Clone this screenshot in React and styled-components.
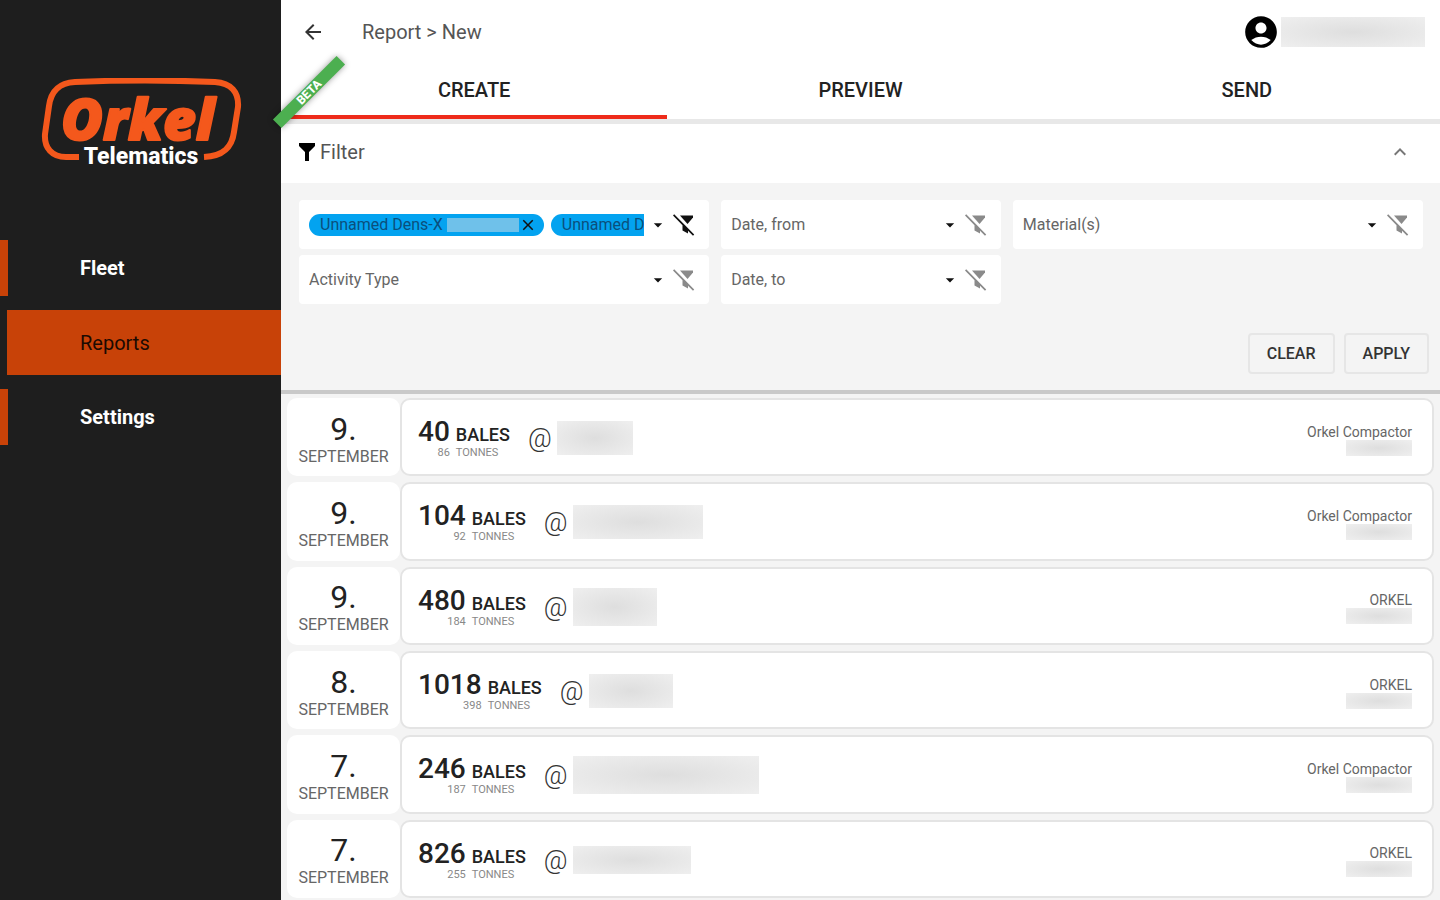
import React, { useState } from "react";
import styled, { createGlobalStyle } from "styled-components";
import { MdAccountCircle, MdArrowBack, MdArrowDropDown, MdClose, MdKeyboardArrowUp } from "react-icons/md";

const GlobalStyle = createGlobalStyle`
  * {
    box-sizing: border-box;
  }

  body {
    margin: 0;
    font-family: Roboto, "Liberation Sans", sans-serif;
    color: #222;
    background: #f4f4f4;
  }

  button, select {
    font-family: inherit;
    color: inherit;
    border: none;
    background: none;
    padding: 0;
    cursor: pointer;
  }
`;

const navItems = ["Fleet", "Reports", "Settings"];
const tabs = ["Create", "Preview", "Send"];

const activities = [
  { day: 9, month: "September", bales: 40, tonnes: 86, placeWidth: 76, placeHeight: 34, owner: "Orkel Compactor" },
  { day: 9, month: "September", bales: 104, tonnes: 92, placeWidth: 130, placeHeight: 34, owner: "Orkel Compactor" },
  { day: 9, month: "September", bales: 480, tonnes: 184, placeWidth: 84, placeHeight: 38, owner: "ORKEL" },
  { day: 8, month: "September", bales: 1018, tonnes: 398, placeWidth: 84, placeHeight: 34, owner: "ORKEL" },
  { day: 7, month: "September", bales: 246, tonnes: 187, placeWidth: 186, placeHeight: 38, owner: "Orkel Compactor" },
  { day: 7, month: "September", bales: 826, tonnes: 255, placeWidth: 118, placeHeight: 28, owner: "ORKEL" },
];

function Logo() {
  return (
    <LogoSvg viewBox="0 0 204 94" role="img" aria-label="Orkel Telematics">
      <path
        d="M38 79 H25 C11 79 3 70 4 56 L8 28 C10 13 18 5 34 4 Q104 1 174 4 C190 5 198 14 197 29 L193 54 C191 69 183 78 163 79"
        fill="none"
        stroke="#f4581c"
        strokeWidth="6"
      />
      <LogoName x="20" y="62">Orkel</LogoName>
      <LogoSub x="100" y="86">Telematics</LogoSub>
    </LogoSvg>
  );
}

function FunnelIcon() {
  return (
    <svg width="17" height="20" viewBox="0 0 17 20" aria-hidden="true">
      <path d="M1 1h16v3l-6 6v9h-4v-9L1 4z" fill="#000" />
    </svg>
  );
}

function FilterOffIcon() {
  return (
    <svg width="24" height="24" viewBox="0 0 24 24" fill="currentColor" aria-hidden="true">
      <path d="M2.200 1.300 1 2.500l9.500 9.700v5.300l5.500 3v-2.700l5 5 1.200-1.200z" />
      <path d="M8 2.500h13v2l-5.500 6.500z" />
    </svg>
  );
}

function FilterSelect({ label }) {
  return (
    <Field>
      <Select aria-label={label} defaultValue="">
        <option value="">{label}</option>
      </Select>
      <MdArrowDropDown size={20} color="#111" aria-hidden="true" />
      <ClearFilter type="button" aria-label={"Clear " + label}>
        <FilterOffIcon />
      </ClearFilter>
    </Field>
  );
}

function Activity({ item }) {
  return (
    <Row>
      <DateCell>
        <Day>{item.day}.</Day>
        <Month>{item.month}</Month>
      </DateCell>
      <Card>
        <Amounts>
          <BaleCount>{item.bales}</BaleCount>
          <BaleUnit>BALES</BaleUnit>
          <Tonnes $right>{item.tonnes}</Tonnes>
          <Tonnes>TONNES</Tonnes>
        </Amounts>
        <At>@</At>
        <Hidden style={{ width: item.placeWidth, height: item.placeHeight }} />
        <Owner>
          <span>{item.owner}</span>
          <HiddenSerial />
        </Owner>
      </Card>
    </Row>
  );
}

export default function App() {
  const [tab, setTab] = useState("Create");
  const [open, setOpen] = useState(true);

  return (
    <>
      <GlobalStyle />
      <Shell>
        <Sidebar>
          <Logo />
          <Nav>
            {navItems.map((name) => (
              <NavLink key={name} href="#" $active={name === "Reports"}>
                {name}
              </NavLink>
            ))}
          </Nav>
        </Sidebar>

        <Main>
          <Beta>BETA</Beta>
          <Header>
            <IconButton type="button" aria-label="Back">
              <MdArrowBack size={24} />
            </IconButton>
            <Crumbs>Report &gt; New</Crumbs>
            <MdAccountCircle size={38} color="#000" />
            <HiddenUser />
          </Header>

          <Tabs role="tablist">
            {tabs.map((name) => (
              <Tab key={name} type="button" role="tab" aria-selected={tab === name} $active={tab === name} onClick={() => setTab(name)}>
                {name}
              </Tab>
            ))}
          </Tabs>

          <FilterToggle type="button" aria-expanded={open} onClick={() => setOpen(!open)}>
            <FunnelIcon />
            <span>Filter</span>
            <MdKeyboardArrowUp size={24} color="#777" />
          </FilterToggle>

          {open && (
            <FilterPanel>
              <Fields>
                <Field>
                  <Chips>
                    <Chip>
                      Unnamed Dens-X
                      <HiddenChip />
                      <ChipRemove type="button" aria-label="Remove Unnamed Dens-X">
                        <MdClose size={18} />
                      </ChipRemove>
                    </Chip>
                    <Chip>Unnamed Dens-X</Chip>
                  </Chips>
                  <IconButton type="button" aria-label="Choose machines">
                    <MdArrowDropDown size={20} color="#111" />
                  </IconButton>
                  <ClearFilter type="button" aria-label="Clear machines" $set>
                    <FilterOffIcon />
                  </ClearFilter>
                </Field>
                <FilterSelect label="Date, from" />
                <FilterSelect label="Material(s)" />
                <FilterSelect label="Activity Type" />
                <FilterSelect label="Date, to" />
              </Fields>
              <Actions>
                <ActionButton type="button">CLEAR</ActionButton>
                <ActionButton type="button">APPLY</ActionButton>
              </Actions>
            </FilterPanel>
          )}

          <List>
            {activities.map((item, i) => (
              <Activity key={i} item={item} />
            ))}
          </List>
        </Main>
      </Shell>
    </>
  );
}

const Shell = styled.div`
  display: flex;
  min-height: 100vh;
`;

const Sidebar = styled.aside`
  flex: 0 0 281px;
  padding-top: 78px;
  background: #1e1e1e;
`;

const LogoSvg = styled.svg`
  display: block;
  width: 204px;
  height: 94px;
  margin-left: 41px;
`;

const LogoName = styled.text`
  font-family: "Open Sans", sans-serif;
  font-size: 57px;
  font-weight: 800;
  font-style: italic;
  fill: #f4581c;
  stroke: #f4581c;
  stroke-width: 2px;
  stroke-linejoin: round;
`;

const LogoSub = styled.text`
  font-size: 23px;
  font-weight: 800;
  text-anchor: middle;
  fill: #fff;
`;

const Nav = styled.nav`
  display: flex;
  flex-direction: column;
  gap: 14px;
  margin-top: 68px;
`;

const NavLink = styled.a`
  display: flex;
  align-items: center;
  height: ${(props) => (props.$active ? "65px" : "56px")};
  margin-left: ${(props) => (props.$active ? "7px" : "0")};
  padding-left: ${(props) => (props.$active ? "73px" : "72px")};
  border-left: ${(props) => (props.$active ? "none" : "8px solid #c84208")};
  background: ${(props) => (props.$active ? "#c84208" : "transparent")};
  color: ${(props) => (props.$active ? "#1c0a02" : "#fff")};
  font-size: 20px;
  font-weight: ${(props) => (props.$active ? 400 : 700)};
  text-decoration: none;
`;

const Main = styled.main`
  position: relative;
  flex: 1;
  min-width: 0;
  display: flex;
  flex-direction: column;
`;

const Beta = styled.div`
  position: absolute;
  top: 86px;
  left: -17px;
  width: 90px;
  background: #4caf50;
  box-shadow: 0 0 6px rgba(0, 0, 0, 0.4);
  color: #fff;
  font-size: 12px;
  font-weight: 800;
  line-height: 12px;
  text-align: center;
  transform: rotate(-45deg);
`;

const Header = styled.header`
  display: flex;
  align-items: center;
  height: 64px;
  padding: 0 15px 0 20px;
  background: #fff;
`;

const IconButton = styled.button`
  display: flex;
  color: #333;
`;

const Crumbs = styled.h1`
  flex: 1;
  margin: 0 0 0 37px;
  font-size: 20px;
  font-weight: 400;
  color: #555;
`;

const Hidden = styled.div`
  background: radial-gradient(ellipse, #dedede, #efefef);
`;

const HiddenUser = styled(Hidden)`
  width: 144px;
  height: 30px;
  margin-left: 1px;
`;

const HiddenSerial = styled(Hidden)`
  width: 66px;
  height: 16px;
`;

const HiddenChip = styled.span`
  width: 72px;
  height: 14px;
  margin-left: 4px;
  background: #6fc1ea;
`;

const Tabs = styled.div`
  display: grid;
  grid-template-columns: repeat(3, 1fr);
  background: #fff;
  border-bottom: 5px solid #e8e8e8;
`;

const Tab = styled.button`
  height: 55px;
  border-bottom: 4px solid ${(props) => (props.$active ? "#ee2b1a" : "transparent")};
  font-size: 20px;
  font-weight: 500;
  text-transform: uppercase;
`;

const FilterToggle = styled.button`
  display: flex;
  align-items: center;
  gap: 5px;
  height: 59px;
  padding: 0 28px 4px 17px;
  background: #fff;
  color: #555;
  font-size: 20px;
  text-align: left;

  span {
    flex: 1;
  }
`;

const FilterPanel = styled.section`
  padding: 17px 11px 16px 18px;
`;

const Fields = styled.div`
  display: grid;
  grid-template-columns: 22fr 15fr 22fr;
  gap: 6px 12px;
  margin-right: 6px;
`;

const Field = styled.div`
  display: flex;
  align-items: center;
  min-width: 0;
  height: 49px;
  padding: 0 13px 0 10px;
  border-radius: 4px;
  background: #fff;
`;

const Select = styled.select`
  flex: 1;
  min-width: 0;
  height: 100%;
  appearance: none;
  outline: none;
  color: #666;
  font-size: 16px;
`;

const ClearFilter = styled.button`
  display: flex;
  margin-left: 4px;
  color: ${(props) => (props.$set ? "#111" : "#8a8a8a")};
`;

const Chips = styled.div`
  display: flex;
  flex: 1;
  gap: 7px;
  min-width: 0;
  margin-right: 4px;
  overflow: hidden;
`;

const Chip = styled.span`
  display: flex;
  flex: none;
  align-items: center;
  height: 22px;
  padding: 0 7px 0 11px;
  border-radius: 11px;
  background: #03a3f0;
  color: #0b4f7c;
  font-size: 16px;
`;

const ChipRemove = styled.button`
  display: flex;
  color: #111;
`;

const Actions = styled.div`
  display: flex;
  justify-content: flex-end;
  gap: 9px;
  margin-top: 29px;
`;

const ActionButton = styled.button`
  height: 41px;
  padding: 0 17px;
  border: 2px solid #e6e6e6;
  border-radius: 4px;
  color: #333;
  font-size: 16px;
  font-weight: 500;
`;

const List = styled.section`
  display: flex;
  flex: 1;
  flex-direction: column;
  gap: 6px;
  padding: 4px 6px 2px;
  border-top: 4px solid #c9c9c9;
`;

const Row = styled.article`
  display: flex;
  flex: 1;
  min-height: 78px;
`;

const DateCell = styled.div`
  display: flex;
  flex: 0 0 113px;
  flex-direction: column;
  align-items: center;
  justify-content: center;
  padding-top: 3px;
  border-radius: 10px;
  background: #fff;
`;

const Day = styled.div`
  font-size: 32px;
  font-weight: 400;
  line-height: 36px;
`;

const Month = styled.div`
  font-size: 16px;
  line-height: 20px;
  color: #666;
  text-transform: uppercase;
`;

const Card = styled.div`
  display: flex;
  flex: 1;
  align-items: center;
  padding: 2px 20px 0 16px;
  border: 2px solid #e4e4e4;
  border-radius: 10px;
  background: #fff;
`;

const Amounts = styled.div`
  display: grid;
  grid-template-columns: auto auto;
  column-gap: 6px;
  align-items: baseline;
`;

const BaleCount = styled.strong`
  font-size: 28px;
  font-weight: 500;
  line-height: 30px;
`;

const BaleUnit = styled.span`
  font-size: 18px;
  font-weight: 500;
  line-height: 20px;
`;

const Tonnes = styled.span`
  font-size: 11px;
  line-height: 12px;
  color: #888;
  text-align: ${(props) => (props.$right ? "right" : "left")};
`;

const At = styled.span`
  margin: 0 5px 0 18px;
  font-size: 26px;
  font-weight: 300;
  color: #333;
`;

const Owner = styled.div`
  display: flex;
  flex-direction: column;
  align-items: flex-end;
  margin-left: auto;
  padding-top: 3px;
  font-size: 14px;
  line-height: 16px;
  color: #666;
`;
